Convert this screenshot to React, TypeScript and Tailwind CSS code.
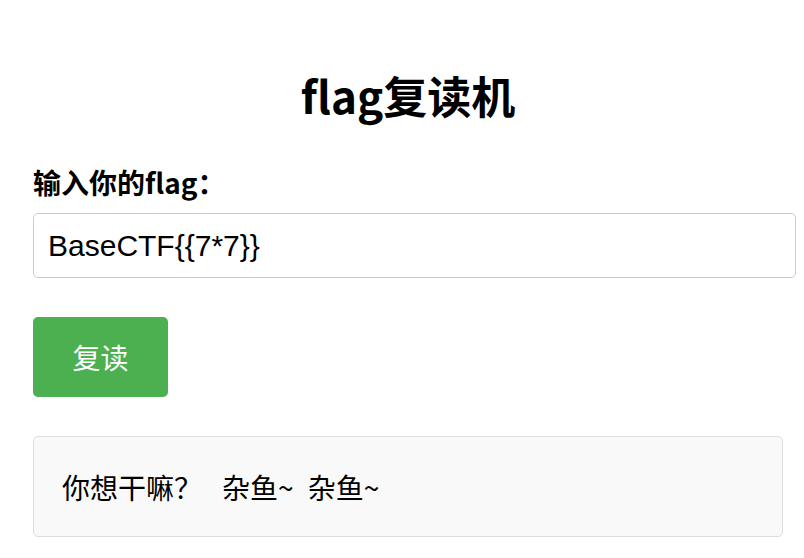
export default function App() {
  return (
    <div
      className="min-h-screen bg-white text-black pl-[33px] pt-[66px]"
      style={{ fontFamily: '"Noto Sans CJK SC", "Noto Sans", sans-serif' }}
    >
      <div className="w-[750px] flex flex-col">
        {/* Title */}
        <h1 className="text-center text-[44px] font-bold leading-[58px]">flag复读机</h1>

        {/* Flag form */}
        <label className="mt-[39px] text-[28px] font-bold leading-[38px]">输入你的flag：</label>
        <div className="mt-[12px] w-[763px] h-[65px] border border-[#cccccc] rounded-[5px] flex items-center pl-[14px]">
          <span
            className="text-[30px] leading-none"
            style={{ fontFamily: '"Liberation Sans", Arial, sans-serif' }}
          >
            BaseCTF{"{{7*7}}"}
          </span>
        </div>

        <button className="mt-[39px] w-[135px] h-[80px] bg-[#4caf50] text-white text-[28px] rounded-[5px] flex items-center justify-center">
          复读
        </button>

        {/* Result */}
        <div className="mt-[39px] h-[101px] bg-[#f9f9f9] border border-[#dddddd] rounded-[5px] flex items-center pl-[28px]">
          <span className="text-[28px] leading-none">你想干嘛？</span>
          <span className="ml-[20px] text-[28px] leading-none [word-spacing:8px]">杂鱼~ 杂鱼~</span>
        </div>
      </div>
    </div>
  );
}
